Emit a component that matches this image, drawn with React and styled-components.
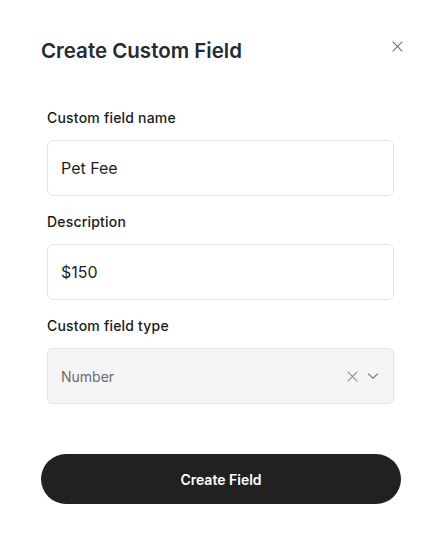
import React from 'react'
import styled, { createGlobalStyle } from 'styled-components'

const GlobalStyle = createGlobalStyle`
  body {
    margin: 0;
    background: #fff;
    font-family: "Inter", "Noto Sans", sans-serif;
  }
`

const Container = styled.div`
  width: 440px;
  height: 543px;
  box-sizing: border-box;
  padding: 37px 39px 0 41px;
`

const Header = styled.div`
  display: flex;
  align-items: flex-start;
  justify-content: space-between;
  height: 30px;
`

const Title = styled.h1`
  margin: 0;
  font-size: 20.5px;
  font-weight: 600;
  color: #262a33;
  line-height: 28px;
`

const CloseButton = styled.button`
  border: none;
  background: transparent;
  padding: 0;
  margin: 4px -2px 0 0;
  cursor: pointer;
  color: #6b6b6b;
  display: flex;
`

const Form = styled.div`
  display: flex;
  flex-direction: column;
  gap: 16px;
  padding: 41px 7px 0 6px;
`

const Field = styled.div`
  display: flex;
  flex-direction: column;
  gap: 12px;
`

const Label = styled.label`
  font-size: 14px;
  font-weight: 500;
  color: #1a1a1a;
  line-height: 20px;
  letter-spacing: 0.2px;
`

const Input = styled.div`
  height: 56px;
  box-sizing: border-box;
  border: 1px solid #e4e4e7;
  border-radius: 6px;
  background: ${props => props.disabled ? '#f5f5f7' : '#fff'};
  display: flex;
  align-items: center;
  padding: 0 14px 0 13px;
  font-size: ${props => props.disabled ? '14px' : '16px'};
  color: ${props => props.disabled ? '#6b6b6b' : '#1f1f1f'};
`

const Value = styled.span`
  flex: 1;
`

const Icons = styled.div`
  display: flex;
  align-items: center;
  gap: 9px;
  color: #8a8a8a;
`

const SubmitButton = styled.button`
  margin: 34px 0 0 -6px;
  width: 360px;
  height: 50px;
  border: none;
  border-radius: 25px;
  background: #212121;
  color: #fff;
  font-family: inherit;
  font-size: 14px;
  font-weight: 600;
  cursor: pointer;
`

function Cross({ size = 12 }) {
  return (
    <svg width={size} height={size} viewBox="0 0 12 12" fill="none" stroke="currentColor" strokeWidth="1.1" strokeLinecap="round">
      <path d="M1 1L11 11M11 1L1 11" />
    </svg>
  )
}

function Chevron() {
  return (
    <svg width="12" height="8" viewBox="0 0 12 8" fill="none" stroke="currentColor" strokeWidth="1.4" strokeLinecap="round" strokeLinejoin="round">
      <path d="M1.5 2L6 6.2L10.5 2" />
    </svg>
  )
}

export default function App() {
  return (
    <Container>
      <GlobalStyle />
      <Header>
        <Title>Create Custom Field</Title>
        <CloseButton><Cross size={11} /></CloseButton>
      </Header>
      <Form>
        <Field>
          <Label>Custom field name</Label>
          <Input><Value>Pet Fee</Value></Input>
        </Field>
        <Field>
          <Label>Description</Label>
          <Input><Value>$150</Value></Input>
        </Field>
        <Field>
          <Label>Custom field type</Label>
          <Input disabled>
            <Value>Number</Value>
            <Icons>
              <Cross size={11} />
              <Chevron />
            </Icons>
          </Input>
        </Field>
        <SubmitButton>Create Field</SubmitButton>
      </Form>
    </Container>
  )
}
